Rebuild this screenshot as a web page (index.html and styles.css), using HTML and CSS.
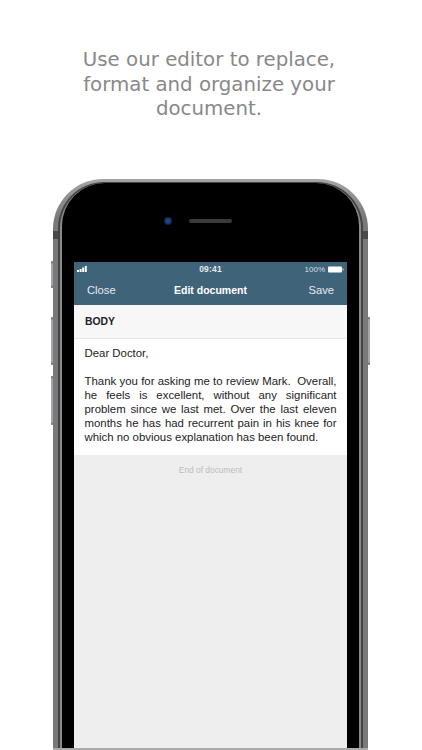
FILE: index.html
```html
<!DOCTYPE html>
<html lang="en">
<head>
  <meta charset="UTF-8">
  <meta name="viewport" content="width=device-width, initial-scale=1.0">
  <title>Edit document</title>
  <link rel="stylesheet" href="styles.css">
</head>
<body>
  <h1 class="headline">Use our editor to replace, format and organize your document.</h1>

  <div class="phone">
    <div class="button silent"></div>
    <div class="button vol-up"></div>
    <div class="button vol-down"></div>
    <div class="button power"></div>
    <div class="antenna antenna-left"></div>
    <div class="antenna antenna-right"></div>
    <div class="crop-line"></div>

    <div class="frame-dark">
      <div class="frame-light">
        <div class="bezel">
          <div class="earpiece">
            <div class="camera"></div>
            <div class="speaker"></div>
          </div>

          <div class="screen">
            <div class="header">
              <div class="status">
                <svg class="signal" width="12" height="6" viewBox="0 0 12 6">
                  <rect x="0" y="4" width="2" height="2" fill="#fff"/>
                  <rect x="2.6" y="3" width="2" height="3" fill="#fff"/>
                  <rect x="5.2" y="1.5" width="2" height="4.5" fill="#fff"/>
                  <rect x="7.8" y="0" width="2" height="6" fill="#fff"/>
                </svg>
                <span class="time">09:41</span>
                <span class="battery-wrap">
                  <span>100%</span>
                  <svg width="17" height="7" viewBox="0 0 17 7">
                    <rect x="1" y="0.5" width="14" height="6" rx="1" fill="#fff"/>
                    <rect x="15.5" y="2.5" width="1" height="2" fill="#cfd8df"/>
                  </svg>
                </span>
              </div>
              <div class="nav">
                <span>Close</span>
                <span class="nav-title">Edit document</span>
                <span class="nav-right">Save</span>
              </div>
            </div>

            <div class="section">BODY</div>
            <div class="letter">
              <p>Dear Doctor,</p>
              <p class="justify">Thank you for asking me to review Mark.&nbsp; Overall, he feels is excellent, without any significant problem since we last met. Over the last eleven months he has had recurrent pain in his knee for which no obvious explanation has been found.</p>
            </div>
            <div class="end-note">End of document</div>
          </div>
        </div>
      </div>
    </div>
  </div>
</body>
</html>
```

FILE: styles.css
```css
html, body {
  margin: 0;
  height: 100%;
}
body {
  width: 422px;
  height: 750px;
  overflow: hidden;
  background-color: #fff;
  font-family: "Liberation Sans", Arial, sans-serif;
}
.headline {
  margin: 0;
  padding: 48px 62px 0 58px;
  height: 179px;
  box-sizing: border-box;
  font-family: "DejaVu Sans", sans-serif;
  font-size: 19.8px;
  font-weight: normal;
  line-height: 24.5px;
  text-align: center;
  color: #888;
}
.phone {
  position: relative;
  width: 315px;
  height: 571px;
  margin-left: 53px;
  box-sizing: border-box;
  padding: 3px 5px 0;
  border-radius: 50px 50px 0 0;
  background: linear-gradient(#a4a4a6, #79797c 40px);
}
.frame-dark {
  height: 100%;
  box-sizing: border-box;
  padding: 1px 2px 0;
  border-radius: 46px 46px 0 0;
  background-color: #444;
}
.frame-light {
  height: 100%;
  box-sizing: border-box;
  padding: 0 2px;
  border-radius: 45px 45px 0 0;
  background-color: #8a8a8c;
}
.bezel {
  height: 100%;
  box-sizing: border-box;
  padding: 0 12px;
  border-radius: 43px 43px 0 0;
  background-color: #000;
}
.earpiece {
  height: 79px;
  display: flex;
  align-items: center;
  gap: 17px;
  padding: 0 0 3px 90px;
  box-sizing: border-box;
}
.camera {
  width: 8px;
  height: 8px;
  border-radius: 50%;
  background: radial-gradient(#24408f 30%, #121a35 70%);
}
.speaker {
  width: 43px;
  height: 4px;
  border-radius: 2px;
  background-color: #3a3a3a;
}
.screen {
  height: 488px;
  background-color: #eee;
}
.header {
  height: 43px;
  background-color: #3f6479;
  color: #fff;
}
.status {
  height: 14px;
  display: grid;
  grid-template-columns: 1fr auto 1fr;
  align-items: center;
  padding: 0 3px;
  font-size: 8px;
}
.time {
  font-size: 8.5px;
  font-weight: bold;
  letter-spacing: 0.2px;
  color: #e4eaee;
}
.battery-wrap {
  display: flex;
  align-items: center;
  justify-content: flex-end;
  gap: 2px;
  color: #d5dde3;
}
.nav {
  height: 29px;
  display: grid;
  grid-template-columns: 1fr auto 1fr;
  align-items: center;
  padding: 0 13px 2px 13px;
  box-sizing: border-box;
  font-size: 11.2px;
  color: #e6ebef;
}
.nav-title {
  font-weight: bold;
  font-size: 10.5px;
  color: #fff;
}
.nav-right {
  text-align: right;
}
.section {
  height: 34px;
  line-height: 34px;
  padding-left: 11px;
  background-color: #f7f7f7;
  border-bottom: 1px solid #e8e8e8;
  box-sizing: border-box;
  font-size: 10.4px;
  font-weight: bold;
  color: #222;
}
.letter {
  background-color: #fff;
  padding: 7px 10.5px 11px;
  font-size: 11.4px;
  line-height: 14px;
  color: #222;
}
.letter p {
  margin: 0 0 14px;
}
.letter p:last-child {
  margin-bottom: 0;
}
.justify {
  text-align: justify;
}
.end-note {
  padding-top: 10px;
  text-align: center;
  font-size: 8.4px;
  color: #bdbdbd;
}
.button {
  position: absolute;
  width: 2px;
  border-radius: 1px;
  background: linear-gradient(#555, #a5a5a7 3px, #a5a5a7 calc(100% - 3px), #555);
}
.silent {
  left: -2px;
  top: 82px;
  height: 27px;
}
.vol-up {
  left: -2px;
  top: 138px;
  height: 48px;
}
.vol-down {
  left: -2px;
  top: 197px;
  height: 49px;
}
.power {
  right: -2px;
  top: 138px;
  height: 48px;
}
.antenna {
  position: absolute;
  top: 52px;
  width: 5px;
  height: 8px;
  background-color: #4a4a4c;
}
.antenna-left {
  left: 0;
}
.antenna-right {
  right: 0;
}
.crop-line {
  position: absolute;
  left: 0;
  right: 0;
  bottom: 0;
  height: 2px;
  background-color: #aaa;
}
```
